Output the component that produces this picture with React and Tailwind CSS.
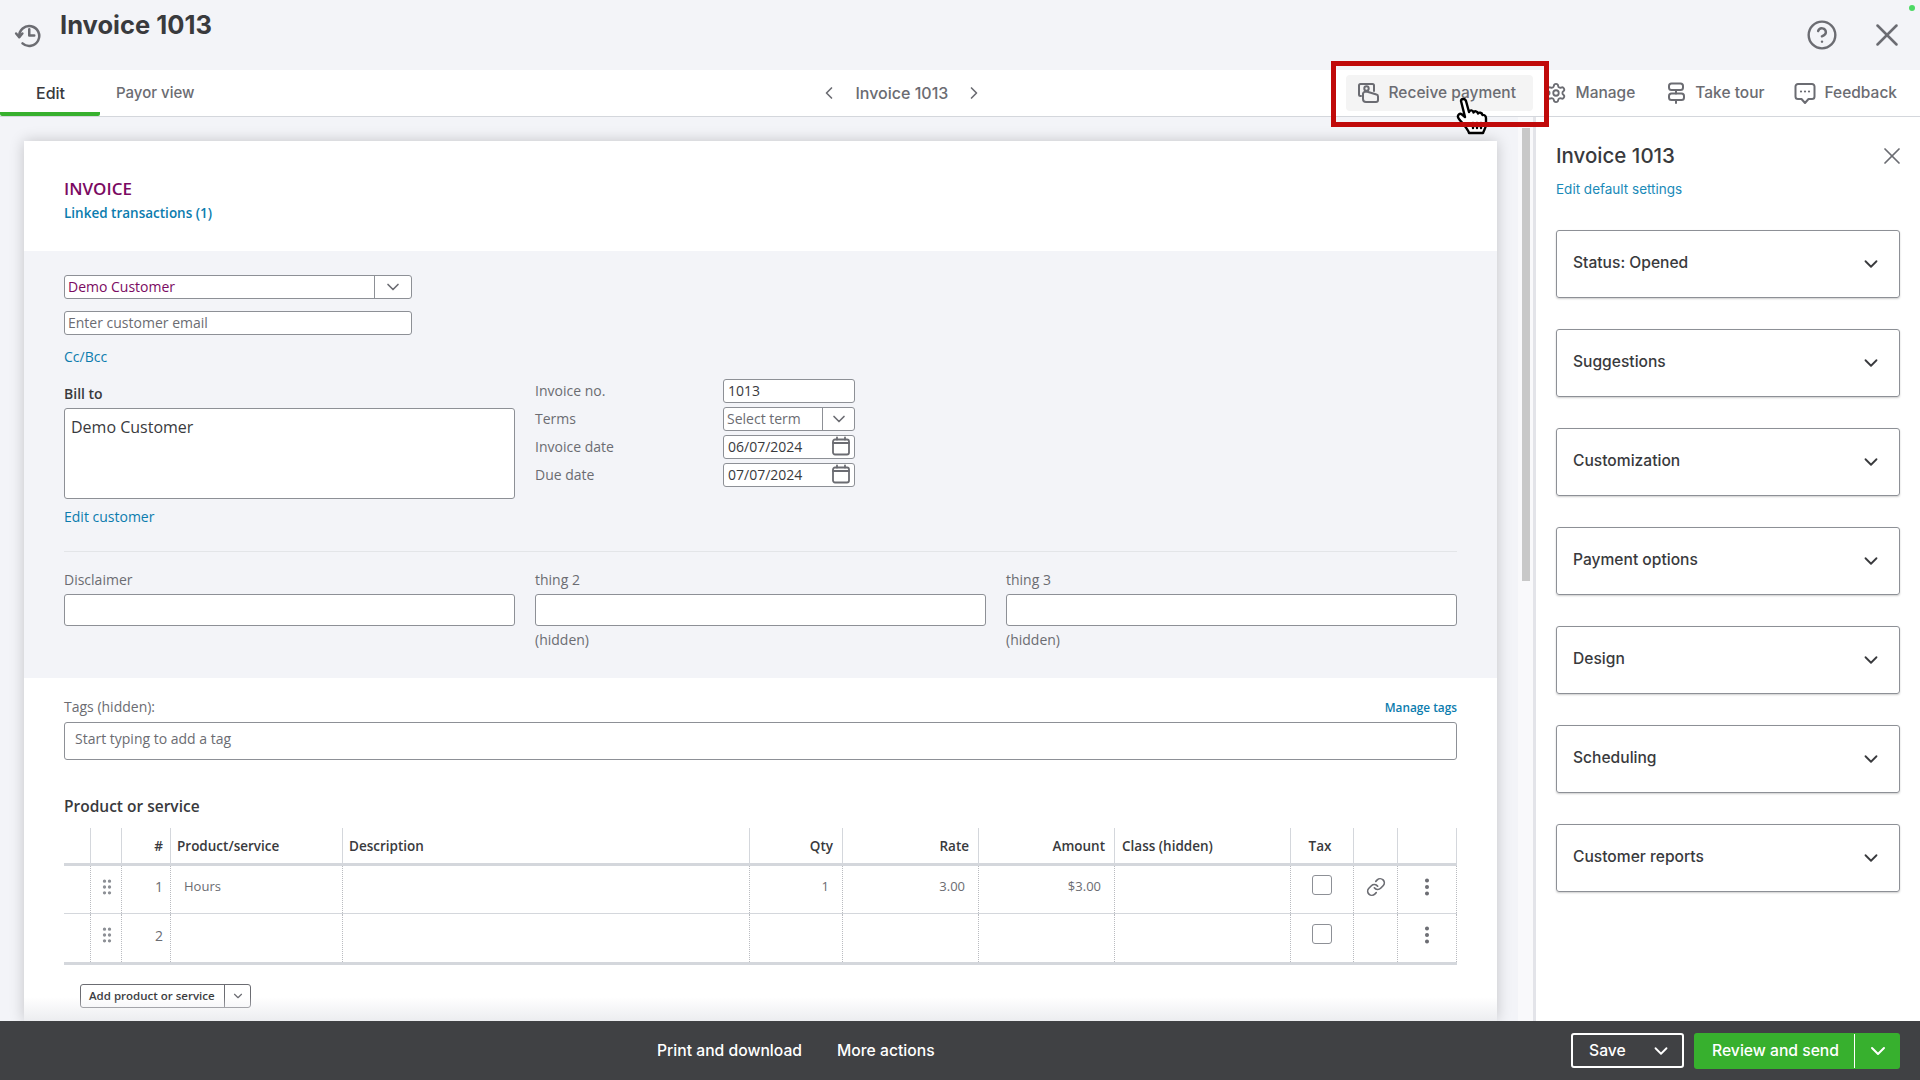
import { ChevronDown, ChevronLeft, ChevronRight, CircleHelp, EllipsisVertical, GripVertical, Link, Settings, X } from 'lucide-react'

const sections = ['Status: Opened', 'Suggestions', 'Customization', 'Payment options', 'Design', 'Scheduling', 'Customer reports']

function HistoryIcon() {
  return (
    <svg width="30" height="30" viewBox="0 0 24 24" fill="none" stroke="#6b6c72" strokeWidth="2" strokeLinecap="round" strokeLinejoin="round">
      <path d="M5 12.500a8 8 0 1 1 2.600 5.400" />
      <path d="M2.500 10 5 13l2.500-3" />
      <path d="M13 6.500v5h4" />
    </svg>
  )
}

function ReceiveIcon() {
  return (
    <svg width="24" height="24" viewBox="0 0 24 24" fill="none" stroke="#6b6c72" strokeWidth="2" strokeLinecap="round" strokeLinejoin="round">
      <path d="M4 15H3.500a1.500 1.500 0 0 1-1.500-1.500V4.500a1.500 1.500 0 0 1 1.500-1.500h12a1.500 1.500 0 0 1 1.500 1.500V10" />
      <circle cx="9.500" cy="7.500" r="2.200" />
      <path d="M6 12.500c.5-1.500 2-2 3.500-2l10 3a2 2 0 0 1 1.500 2V19a2 2 0 0 1-2 2H9a3 3 0 0 1-3-3v-5.500z" />
    </svg>
  )
}

function TourIcon() {
  return (
    <svg width="24" height="24" viewBox="0 0 24 24" fill="none" stroke="#6b6c72" strokeWidth="2" strokeLinecap="round" strokeLinejoin="round">
      <rect x="5" y="2.500" width="14" height="6.500" rx="2.500" />
      <rect x="5" y="12.500" width="15" height="6.500" rx="2.500" />
      <path d="M12 9v3.500M12 19v3" />
    </svg>
  )
}

function FeedbackIcon() {
  return (
    <svg width="24" height="24" viewBox="0 0 24 24" fill="none" stroke="#6b6c72" strokeWidth="2" strokeLinecap="round" strokeLinejoin="round">
      <path d="M5 3h14a2.500 2.500 0 0 1 2.500 2.500v10A2.500 2.500 0 0 1 19 18h-3.500L12 22l-3.500-4H5a2.500 2.500 0 0 1-2.500-2.500v-10A2.500 2.500 0 0 1 5 3z" />
      <path d="M8 10.500h.01M12 10.500h.01M16 10.500h.01" strokeWidth="2.200" />
    </svg>
  )
}

function CalendarIcon() {
  return (
    <svg width="20" height="20" viewBox="0 0 20 20" fill="none" stroke="#6b6c72" strokeWidth="1.800" strokeLinecap="round" strokeLinejoin="round">
      <rect x="2" y="3.500" width="16" height="15" rx="2" />
      <path d="M2 7h16M6 1.500v2M14 1.500v2" />
    </svg>
  )
}

function HandCursor() {
  return (
    <svg className="absolute left-[1456px] top-[97px]" width="34" height="40" viewBox="0 0 34 40" fill="#fff" stroke="#000" strokeWidth="2.400" strokeLinejoin="round" strokeLinecap="round">
      <path d="M5 4C5 1.500 9 1 10 4l3 11c1-2.500 4-2 4.500.5 1-2 4-1.500 4.500 1 1-1.500 4-1 4.500 1.500 1-.5 3.500.5 3.500 3v6c0 4-2 6-3 9H13c-1-4-5-8-10-14-2.500-3 0-6.500 3-4.500l3 2.500z" />
      <path d="M17 26v5M21 26v5M25 26v5" />
    </svg>
  )
}

function NavAction({ icon, label }) {
  return (
    <div className="flex items-center gap-[7px] text-[15.5px] font-medium text-[#6b6c72]">
      {icon}
      <span>{label}</span>
    </div>
  )
}

function Box({ children, className }) {
  return <div className={`flex items-center pb-[2px] border border-[#8d9096] rounded-[3px] bg-white ${className}`}>{children}</div>
}

function MetaLabel({ children }) {
  return <div className="text-[14px] text-[#6b6c72] flex items-center h-6 pb-[2px]">{children}</div>
}

function Head({ children, className }) {
  return <div className={`h-[35px] pt-[2px] flex items-center text-[13.5px] font-semibold text-[#393a3d] border-l border-[#d4d7dc] ${className}`}>{children}</div>
}

function Cell({ children, className }) {
  return <div className={`flex items-center pb-[6px] text-[13px] text-[#6b6c72] border-l border-dotted border-[#b9bbc0] ${className}`}>{children}</div>
}

function Row({ num, product, qty, rate, amount, link, line }) {
  return (
    <>
      <div className={line}></div>
      <Cell className={`${line} justify-center pl-[2px]`}><GripVertical size={20} color="#8d9096" /></Cell>
      <Cell className={`${line} justify-end pr-[7px] text-[14px]`}>{num}</Cell>
      <Cell className={`${line} pl-[13px]`}>{product}</Cell>
      <Cell className={line}></Cell>
      <Cell className={`${line} justify-end pr-[13px]`}>{qty}</Cell>
      <Cell className={`${line} justify-end pr-[13px]`}>{rate}</Cell>
      <Cell className={`${line} justify-end pr-[13px]`}>{amount}</Cell>
      <Cell className={line}></Cell>
      <Cell className={`${line} justify-center`}>
        <div className="w-5 h-5 -mt-[3px] rounded-[3px] border border-[#8d9096] bg-white"></div>
      </Cell>
      <Cell className={`${line} justify-center`}>{link && <Link size={20} color="#6b6c72" strokeWidth={2} />}</Cell>
      <Cell className={`${line} justify-center border-r`}><EllipsisVertical size={22} color="#6b6c72" strokeWidth={2.400} /></Cell>
    </>
  )
}

function Invoice() {
  return (
    <div className="relative flex-1 min-h-0 w-[1473px] bg-white overflow-hidden shadow-[0_0_14px_rgba(0,0,0,0.2)] font-['Open_Sans',sans-serif]">
      <div className="h-[110px] px-10 pt-[37px]">
        <div className="text-[17px] leading-[22px] font-semibold text-[#7b0a62]">INVOICE</div>
        <div className="mt-[3px] text-[13.5px] leading-5 font-semibold text-[#0b7cae]">Linked transactions (1)</div>
      </div>

      <div className="h-[427px] bg-[#f3f4f8] px-10 pt-6">
        <Box className="w-[348px] h-6 text-[14px] text-[#7b0a62]">
          <span className="flex-1 pl-[3px]">Demo Customer</span>
          <div className="w-[37px] h-[22px] -mb-[2px] flex items-center justify-center border-l border-[#8d9096]"><ChevronDown size={20} color="#6b6c72" /></div>
        </Box>
        <Box className="mt-[12px] w-[348px] h-6 text-[14px] text-[#6b6c72] pl-[3px]">Enter customer email</Box>
        <div className="mt-[12px] text-[14px] leading-5 text-[#0b7cae]">Cc/Bcc</div>

        <div className="mt-[12px] flex gap-5">
          <div className="w-[451px]">
            <div className="mt-[5px] text-[14px] leading-5 font-semibold text-[#393a3d]">Bill to</div>
            <Box className="mt-1 h-[91px] items-start! pl-[6px] pt-[6px] text-[16px] text-[#393a3d]">Demo Customer</Box>
            <div className="mt-2 text-[14px] leading-5 text-[#0b7cae]">Edit customer</div>
          </div>
          <div className="w-[320px] grid grid-cols-[188px_132px] gap-y-1 content-start">
            <MetaLabel>Invoice no.</MetaLabel>
            <Box className="h-6 text-[14px] text-[#393a3d] pl-[4px]">1013</Box>
            <MetaLabel>Terms</MetaLabel>
            <Box className="h-6 text-[14px] text-[#6b6c72]">
              <span className="w-[98px] pl-[3px]">Select term</span>
              <div className="flex-1 h-[22px] -mb-[2px] flex items-center justify-center border-l border-[#8d9096]"><ChevronDown size={20} color="#6b6c72" /></div>
            </Box>
            <MetaLabel>Invoice date</MetaLabel>
            <Box className="h-6 text-[14px] text-[#393a3d] pl-[4px] pr-[3px] justify-between">06/07/2024<CalendarIcon /></Box>
            <MetaLabel>Due date</MetaLabel>
            <Box className="h-6 text-[14px] text-[#393a3d] pl-[4px] pr-[3px] justify-between">07/07/2024<CalendarIcon /></Box>
          </div>
        </div>

        <div className="mt-6 h-px bg-[#e3e5e8]"></div>

        <div className="mt-[18px] grid grid-cols-[451px_451px_451px] gap-x-5 text-[14px] leading-5 text-[#6b6c72]">
          <div>
            <div>Disclaimer</div>
            <Box className="mt-1 h-8"></Box>
          </div>
          <div>
            <div>thing 2</div>
            <Box className="mt-1 h-8"></Box>
            <div className="mt-1">(hidden)</div>
          </div>
          <div>
            <div>thing 3</div>
            <Box className="mt-1 h-8"></Box>
            <div className="mt-1">(hidden)</div>
          </div>
        </div>
      </div>

      <div className="px-10 pt-[19px]">
        <div className="flex items-center justify-between text-[14px] leading-5 text-[#6b6c72]">
          <span>Tags (hidden):</span>
          <span className="text-[11.8px] font-semibold text-[#0b7cae]">Manage tags</span>
        </div>
        <Box className="mt-[5px] h-[38px] pl-[10px] pb-[5px]! text-[14px] text-[#6b6c72]">Start typing to add a tag</Box>

        <div className="mt-[34px] text-[15.5px] leading-6 font-semibold text-[#393a3d]">Product or service</div>

        <div className="mt-[10px] grid grid-cols-[26px_31px_49px_172px_407px_93px_136px_136px_176px_63px_44px_60px]">
          <div className="h-[35px]"></div>
          <Head></Head>
          <Head className="justify-end pr-[7px]">#</Head>
          <Head className="pl-[6px]">Product/service</Head>
          <Head className="pl-[6px]">Description</Head>
          <Head className="justify-end pr-[9px]">Qty</Head>
          <Head className="justify-end pr-[9px]">Rate</Head>
          <Head className="justify-end pr-[9px]">Amount</Head>
          <Head className="pl-[7px]">Class (hidden)</Head>
          <Head className="justify-center pr-[4px]">Tax</Head>
          <Head></Head>
          <Head className="border-r"></Head>

          <div className="col-span-12 h-[3px] bg-[#d4d7dc]"></div>
          <Row num="1" product="Hours" qty="1" rate="3.00" amount="$3.00" link line="h-[47px]" />
          <div className="col-span-12 h-px bg-[#d4d7dc]"></div>
          <Row num="2" line="h-[48px]" />
          <div className="col-span-12 h-[3px] bg-[#d4d7dc]"></div>
        </div>

        <div className="mt-[19px] ml-4 w-[171px] h-6 flex items-center border border-[#6b6c72] rounded-[3px] text-[11.5px] font-semibold text-[#393a3d]">
          <span className="w-[144px] pl-2 border-r border-[#6b6c72] leading-[22px]">Add product or service</span>
          <div className="flex-1 flex justify-center"><ChevronDown size={14} color="#6b6c72" /></div>
        </div>
      </div>

      <div className="absolute left-0 right-0 bottom-0 h-[24px] bg-linear-to-b from-transparent to-[#ecedf0]"></div>
    </div>
  )
}

export default function App() {
  return (
    <div className="relative w-[1920px] h-[1080px] flex flex-col overflow-hidden bg-white text-[#393a3d] font-['Inter',sans-serif]">
      <header className="h-[70px] shrink-0 bg-[#f3f4f8] flex pl-[13px] pr-[14px]">
        <div className="mt-[21px]"><HistoryIcon /></div>
        <h1 className="ml-[17px] mt-[10px] text-[25.5px] leading-[30px] font-bold">Invoice 1013</h1>
        <div className="ml-auto mt-[16px] flex gap-[30px] h-[38px] items-center text-[#6b6c72]">
          <CircleHelp size={32} strokeWidth={1.800} />
          <X size={38} strokeWidth={1.600} />
        </div>
      </header>

      <nav className="h-[47px] shrink-0 flex items-center border-b border-[#d4d7dc]">
        <div className="w-[100px] h-full flex items-center pl-9 pt-[3px] text-[16px] font-medium border-b-4 border-[#37b02e] rounded-b-[2px]">Edit</div>
        <div className="ml-4 text-[15px] font-medium text-[#6b6c72]">Payor view</div>

        <div className="ml-[625px] flex items-center text-[16px] font-medium text-[#6b6c72]">
          <ChevronLeft size={20} />
          <span className="mx-[16px]">Invoice 1013</span>
          <ChevronRight size={20} />
        </div>

        <div className="ml-auto pr-[23px] flex items-center">
          <div className="w-[187px] h-9 mr-[12px] bg-[#f4f4f4] rounded-[4px] flex items-center pl-[11px] gap-[8px] text-[15.5px] font-medium text-[#6b6c72]">
            <ReceiveIcon />
            <span>Receive payment</span>
          </div>
          <div className="flex items-center gap-[29px]">
            <NavAction icon={<Settings size={22} strokeWidth={2} className="mr-[2px]" />} label="Manage" />
            <NavAction icon={<TourIcon />} label="Take tour" />
            <NavAction icon={<FeedbackIcon />} label="Feedback" />
          </div>
        </div>
      </nav>

      <main className="flex-1 min-h-0 flex">
        <div className="w-[1518px] bg-[#f3f4f8] pl-6 pt-[24px] flex flex-col overflow-hidden">
          <Invoice />
        </div>
        <div className="w-[15px] bg-[#f9f9fb] pt-[11px] pl-[4px]">
          <div className="w-2 h-[453px] bg-[#c8c8c8]"></div>
        </div>
        <aside className="flex-1 border-l-[3px] border-[#e3e4e9] bg-white pl-[20px] pr-5 pt-[26px]">
          <div className="flex items-center justify-between h-[26px] text-[20.5px] font-medium">
            Invoice 1013
            <X size={28} strokeWidth={1.500} color="#6b6c72" className="-mr-[6px]" />
          </div>
          <div className="mt-[10px] text-[13.5px] leading-5 text-[#1a8ab8]">Edit default settings</div>
          <div className="mt-[31px] flex flex-col gap-[31px]">
            {sections.map(s => (
              <div key={s} className="h-[68px] flex justify-between items-start pl-4 pr-[17px] pt-[20px] border border-[#8d9096] rounded-[3px] text-[15.6px] font-medium shadow-[0_1px_2px_rgba(0,0,0,0.2)]">
                {s}
                <ChevronDown size={22} color="#393a3d" strokeWidth={2} className="mt-[2px]" />
              </div>
            ))}
          </div>
        </aside>
      </main>

      <footer className="h-[59px] shrink-0 bg-[#404144] flex items-center pl-[657px] pr-5 text-[15.7px] font-medium text-white">
        <span>Print and download</span>
        <span className="ml-[35px]">More actions</span>
        <div className="ml-auto w-[113px] h-[35px] flex items-center justify-between pl-4 pr-[10px] border-2 border-white rounded-[3px]">
          Save
          <ChevronDown size={22} />
        </div>
        <div className="ml-[10px] w-[206px] h-9 flex items-center bg-[#37b02e] rounded-[3px]">
          <span className="w-[161px] pl-[18px] leading-[34px] border-r border-white">Review and send</span>
          <div className="flex-1 flex justify-center"><ChevronDown size={24} /></div>
        </div>
      </footer>

      <div className="absolute right-[5px] top-[5px] w-[6px] h-[6px] rounded-full bg-[#4cd964]"></div>
      <HandCursor />
      <div className="absolute left-[1331px] top-[61px] w-[218px] h-[66px] border-[5px] border-[#c00a0a]"></div>
    </div>
  )
}
